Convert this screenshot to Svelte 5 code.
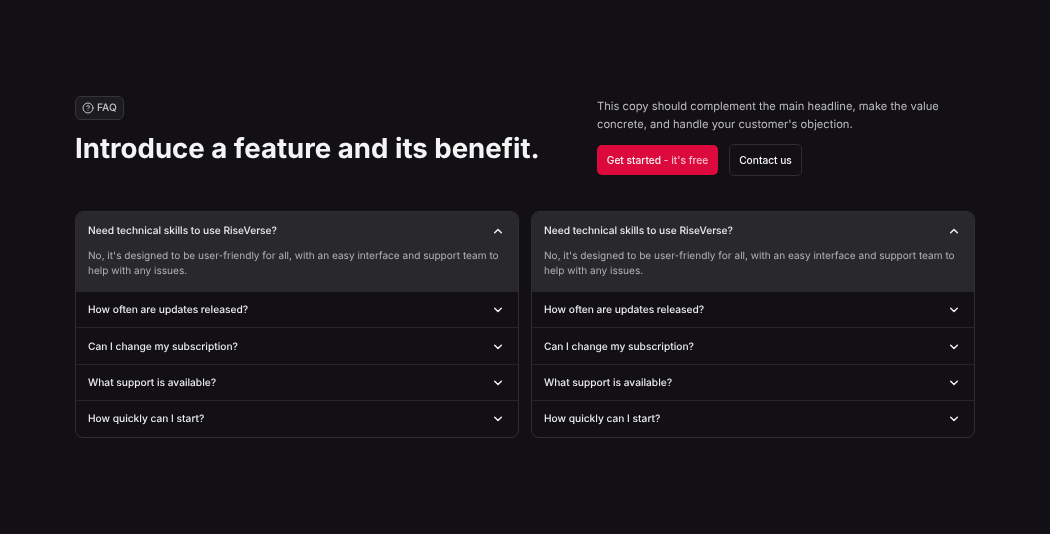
<script lang="ts">
  const questions = [
    'How often are updates released?',
    'Can I change my subscription?',
    'What support is available?',
    'How quickly can I start?',
  ]
  const columns = [0, 1]
</script>

<section class="faq">
  <header class="faq-header">
    <div class="intro">
      <span class="badge">
        <svg width="12" height="12" viewBox="0 0 24 24" fill="none" stroke="currentColor" stroke-width="2" stroke-linecap="round" stroke-linejoin="round">
          <circle cx="12" cy="12" r="10" />
          <path d="M9.1 9a3 3 0 0 1 5.8 1c0 2-3 3-3 3" />
          <path d="M12 17h.01" />
        </svg>
        FAQ
      </span>
      <h1>Introduce a feature and its benefit.</h1>
    </div>
    <div class="aside">
      <p>This copy should complement the main headline, make the value concrete, and handle your customer's objection.</p>
      <div class="actions">
        <button class="btn primary">Get started <span class="dim">- it's free</span></button>
        <button class="btn outline">Contact us</button>
      </div>
    </div>
  </header>

  <div class="columns">
    {#each columns as col (col)}
      <div class="accordion">
        <div class="item open">
          <div class="question">
            <span>Need technical skills to use RiseVerse?</span>
            <svg class="chevron" width="12" height="12" viewBox="0 0 12 12" fill="none" stroke="currentColor" stroke-width="1.4" stroke-linecap="round" stroke-linejoin="round">
              <path d="M2.7 7.7 6 4.4l3.3 3.3" />
            </svg>
          </div>
          <p class="answer">No, it's designed to be user-friendly for all, with an easy interface and support team to help with any issues.</p>
        </div>
        {#each questions as q}
          <div class="item">
            <div class="question compact">
              <span>{q}</span>
              <svg class="chevron" width="12" height="12" viewBox="0 0 12 12" fill="none" stroke="currentColor" stroke-width="1.4" stroke-linecap="round" stroke-linejoin="round">
                <path d="M2.7 4.3 6 7.6l3.3-3.3" />
              </svg>
            </div>
          </div>
        {/each}
      </div>
    {/each}
  </div>
</section>

<style>
  :global(body) {
    background: #121014;
    font-family: Inter, "Liberation Sans", sans-serif;
    text-rendering: geometricPrecision;
  }

  .faq {
    box-sizing: border-box;
    height: 534px;
    padding: 96px 75px 0;
    display: flex;
    flex-direction: column;
    gap: 35px;
    will-change: transform;
  }

  .faq-header {
    display: flex;
    justify-content: space-between;
  }

  .intro {
    display: flex;
    flex-direction: column;
    align-items: flex-start;
    gap: 8px;
  }

  .badge {
    display: flex;
    align-items: center;
    gap: 3px;
    height: 24px;
    box-sizing: border-box;
    padding: 0 6px;
    font-size: 10.2px;
    font-weight: 500;
    color: #c5c4c8;
    background: #1c1b1f;
    border: 1px solid #36353a;
    border-radius: 6px;
  }

  h1 {
    margin: 0;
    font-size: 27.6px;
    line-height: 40px;
    font-weight: 650;
    color: #f4f4f5;
  }

  .aside {
    width: 378px;
    padding-top: 1px;
  }

  .aside p {
    margin: 0;
    font-size: 11.2px;
    line-height: 18px;
    color: #bcbbc0;
  }

  .actions {
    display: flex;
    align-items: center;
    gap: 11px;
    margin-top: 11px;
  }

  .btn {
    font: inherit;
    font-size: 10.2px;
    font-weight: 500;
    border-radius: 5px;
    color: #f4f4f5;
  }

  .primary {
    height: 30px;
    width: 121px;
    padding: 0;
    background: #dc0a3c;
    border: none;
  }

  .primary .dim {
    color: #f8c0cc;
  }

  .outline {
    height: 32px;
    width: 73px;
    padding: 0;
    background: transparent;
    border: 1px solid #2e2d32;
  }

  .columns {
    display: grid;
    grid-template-columns: 1fr 1fr;
    gap: 12px;
  }

  .accordion {
    border: 1px solid #2e2d32;
    border-radius: 8px;
    overflow: hidden;
  }

  .item + .item {
    border-top: 1px solid #26252a;
  }

  .item.open {
    background: #29282b;
  }

  .question {
    display: flex;
    align-items: center;
    justify-content: space-between;
    box-sizing: border-box;
    height: 36px;
    padding: 1px 14px 0 12px;
    font-size: 10.2px;
    font-weight: 500;
    color: #ededf0;
  }

  .question.compact {
    height: 35.4px;
  }

  .chevron {
    color: #f4f4f5;
  }

  .answer {
    margin: 0;
    padding: 1px 12px 12px;
    font-size: 10.08px;
    line-height: 15px;
    color: #b3b2b7;
  }
</style>
